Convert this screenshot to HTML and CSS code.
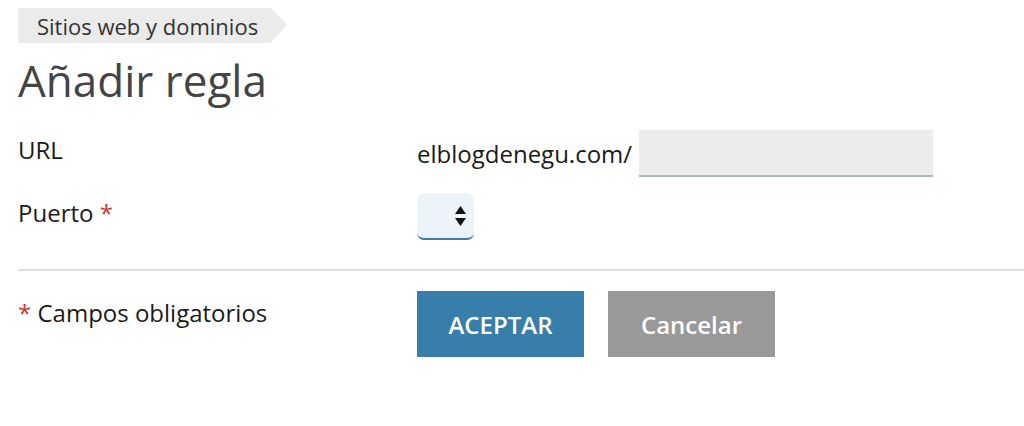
FILE: index.html
```html
<!DOCTYPE html>
<html lang="es">
<head>
<meta charset="utf-8">
<title>Añadir regla</title>
<link rel="stylesheet" href="styles.css">
</head>
<body>
<div class="page">
  <nav class="breadcrumb"><span class="crumb">Sitios web y dominios</span></nav>
  <h1 class="title">Añadir regla</h1>
  <form class="form">
    <div class="row">
      <label class="label">URL</label>
      <div class="field">
        <span class="prefix">elblogdenegu.com/</span>
        <input class="text-input" type="text">
      </div>
    </div>
    <div class="row">
      <label class="label">Puerto <span class="req">*</span></label>
      <div class="field">
        <div class="select">
          <svg class="select-arrows" width="13" height="22" viewBox="0 0 13 22"><path d="M6.5 1 L12 9 L1 9 Z M1 13 L12 13 L6.5 21 Z" fill="#111"/></svg>
        </div>
      </div>
    </div>
  </form>
  <div class="divider"></div>
  <div class="row footer">
    <div class="label note"><span class="req">*</span> Campos obligatorios</div>
    <div class="buttons">
      <button class="btn btn-primary" type="button">ACEPTAR</button>
      <button class="btn btn-secondary" type="button">Cancelar</button>
    </div>
  </div>
</div>
</body>
</html>
```
FILE: styles.css
```css
* { box-sizing: border-box; }
html, body { margin: 0; padding: 0; background: #fff; }
body {
  font-family: "Open Sans", "Noto Sans", "DejaVu Sans", sans-serif;
  color: #222;
}
.page { padding: 8px 0 0 18px; }

.breadcrumb { display: flex; }
.crumb {
  position: relative;
  display: inline-flex;
  align-items: center;
  height: 35px;
  padding: 0 13px 0 19px;
  background: #ebebeb;
  font-size: 22px;
  color: #333;
}
.crumb::after {
  content: "";
  position: absolute;
  left: 100%;
  top: 0;
  border-top: 17.5px solid transparent;
  border-bottom: 17.5px solid transparent;
  border-left: 16px solid #ebebeb;
}

.title {
  margin: 7px 0 0;
  font-size: 44px;
  font-weight: 400;
  line-height: 60px;
  color: #444;
}

.form { margin-top: 20px; display: flex; flex-direction: column; gap: 16px; }
.row { display: flex; align-items: center; }
.label { width: 399px; font-size: 24px; color: #1a1a1a; }
.form .label { padding-bottom: 8px; }
.req { color: #c8362b; }
.field { display: flex; align-items: center; }
.prefix { font-size: 24px; color: #1a1a1a; margin-right: 7px; }
.text-input {
  width: 294px;
  height: 47px;
  border: 0;
  border-bottom: 2px solid #a9b9c1;
  background: #ececec;
  outline: none;
  margin: 0;
}
.select {
  width: 57px;
  height: 47px;
  background: #edf4f9;
  border-radius: 7px;
  border-bottom: 2px solid #3b7db3;
  display: flex;
  align-items: center;
  justify-content: flex-end;
  padding-right: 7px;
}

.divider { height: 2px; background: #e0e0e0; margin: 29px 0 20px; }

.footer { align-items: flex-start; }
.note { padding-top: 5px; }
.buttons { display: flex; gap: 24px; }
.btn {
  width: 167px;
  height: 66px;
  border: 0;
  margin: 0;
  font-family: "Open Sans", "Noto Sans", sans-serif;
  font-size: 24px;
  font-weight: 600;
  color: #fff;
  cursor: pointer;
}
.btn-primary { background: #377eab; }
.btn-secondary { background: #999; }
```
